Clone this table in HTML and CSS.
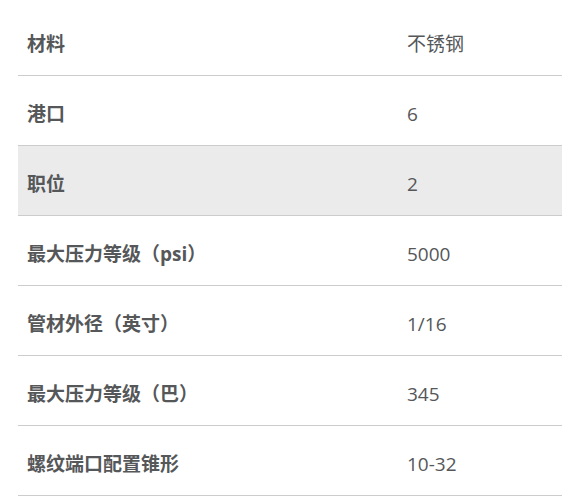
FILE: index.html
```html
<!DOCTYPE html>
<html lang="zh">
<head>
<meta charset="utf-8">
<link rel="stylesheet" href="styles.css">
</head>
<body>
<div class="specs">
  <div class="row"><div class="label">材料</div><div class="value">不锈钢</div></div>
  <div class="row"><div class="label">港口</div><div class="value">6</div></div>
  <div class="row hl"><div class="label">职位</div><div class="value">2</div></div>
  <div class="row"><div class="label">最大压力等级（psi）</div><div class="value">5000</div></div>
  <div class="row"><div class="label">管材外径（英寸）</div><div class="value">1/16</div></div>
  <div class="row"><div class="label">最大压力等级（巴）</div><div class="value">345</div></div>
  <div class="row"><div class="label">螺纹端口配置锥形</div><div class="value">10-32</div></div>
</div>
</body>
</html>
```
FILE: styles.css
```css
html, body {
  margin: 0;
  padding: 0;
  background: #fff;
}
* {
  box-sizing: border-box;
}
body {
  font-family: "Open Sans", "Noto Sans CJK SC", sans-serif;
  font-size: 19px;
  color: #555759;
  overflow: hidden;
}
.specs {
  margin: 6px 0 0 18px;
  display: flex;
  flex-direction: column;
}
.row {
  display: flex;
  border-bottom: 1px solid #cccccc;
  padding: 28px 0 20px;
  line-height: 21px;
}
.row.hl {
  background: #ebebeb;
}
.label {
  width: 380px;
  padding-left: 9px;
  font-weight: 700;
}
.value {
  padding-left: 9px;
}
```
